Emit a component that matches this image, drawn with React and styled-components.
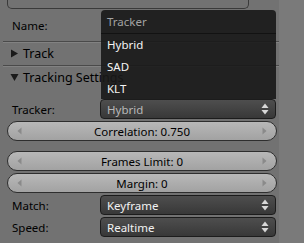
import React from "react";
import styled, { createGlobalStyle } from "styled-components";

const Global = createGlobalStyle`
  html, body { margin: 0; padding: 0; background: #727272; }
  body { font-family: "Noto Sans", "DejaVu Sans", sans-serif; }
`;

const Screen = styled.div`
  position: relative;
  width: 304px;
  height: 243px;
  overflow: hidden;
  display: flex;
  background: #7a7a7a;
`;

const Panel = styled.div`
  width: 279px;
  display: flex;
  flex-direction: column;
  background: #727272;
`;

const TopBox = styled.div`
  margin-left: 7px;
  width: 240px;
  height: 8px;
  border: 1px solid #3a3a3a;
  border-top: none;
  border-radius: 0 0 5px 5px;
`;

const FieldRow = styled.div`
  display: flex;
  align-items: center;
  height: ${(p) => p.h}px;
  padding: 0 3px 0 12px;
  margin-top: ${(p) => p.mt || 0}px;
`;

const Label = styled.span`
  width: 89px;
  font-size: 11.5px;
  color: #000;
`;

const Sep = styled.div`
  height: 1px;
  margin-left: 3px;
  background: #4a4a4a;
  box-shadow: 0 1px 0 #828282;
`;

const Header = styled.div`
  display: flex;
  align-items: center;
  height: ${(p) => p.h}px;
  padding-left: 10px;
  font-size: 12.5px;
  color: #000;
  gap: 4px;
`;

const Tri = styled.svg`
  width: 9px;
  height: 9px;
`;

const Dropdown = styled.div`
  flex: none;
  width: 174px;
  height: 18px;
  box-sizing: content-box;
  border: 1px solid #1c1c1c;
  border-radius: 4px;
  background: linear-gradient(#4e4e4e, #383838);
  display: flex;
  align-items: center;
  color: ${(p) => (p.dim ? "#b8b8b8" : "#f2f2f2")};
  font-size: 11.5px;
`;

const DropText = styled.span`
  flex: 1;
  padding-left: 6px;
`;

const Arrows = styled.svg`
  width: 8px;
  height: 12px;
  margin-right: 6px;
`;

const SliderRow = styled.div`
  padding: 0 2px 0 7px;
  margin-top: ${(p) => p.mt || 0}px;
`;

const Slider = styled.div`
  height: 18px;
  border: 1px solid #2e2e2e;
  border-radius: 10px;
  background: linear-gradient(#b8b8b8, #a2a2a2);
  display: flex;
  align-items: center;
  font-size: 11.5px;
  color: #000;
`;

const SliderText = styled.span`
  flex: 1;
  text-align: center;
`;

const SmallArrow = styled.svg`
  width: 5px;
  height: 8px;
  margin: 0 9px;
`;

const Menu = styled.div`
  position: absolute;
  left: 101px;
  top: 10px;
  width: 175px;
  height: 89px;
  background: rgba(24, 24, 24, 0.9);
  border-radius: 4px 4px 0 0;
  display: flex;
  flex-direction: column;
  font-size: 11.5px;
`;

const MenuTitle = styled.div`
  height: 23px;
  display: flex;
  align-items: center;
  padding-left: 6px;
  color: #a3a3a3;
  border-bottom: 1px solid #121212;
`;

const MenuItem = styled.div`
  height: 22px;
  display: flex;
  align-items: center;
  padding-left: 6px;
  color: #f4f4f4;
`;

const UpDown = () => (
  <Arrows viewBox="0 0 8 12">
    <path d="M4 0.5 L7.5 5 L0.5 5 Z" fill="#d8d8d8" />
    <path d="M4 11.5 L7.5 7 L0.5 7 Z" fill="#d8d8d8" />
  </Arrows>
);

const SliderBar = ({ children }) => (
  <Slider>
    <SmallArrow viewBox="0 0 5 8">
      <path d="M0.5 4 L4.5 0.5 L4.5 7.5 Z" fill="#8a8a8a" />
    </SmallArrow>
    <SliderText>{children}</SliderText>
    <SmallArrow viewBox="0 0 5 8">
      <path d="M4.5 4 L0.5 0.5 L0.5 7.5 Z" fill="#8a8a8a" />
    </SmallArrow>
  </Slider>
);

export default function App() {
  return (
    <>
      <Global />
      <Screen>
        <Panel>
          <TopBox />
          <FieldRow h={32}>
            <Label>Name:</Label>
          </FieldRow>
          <Sep />
          <Header h={23}>
            <Tri viewBox="0 0 9 9">
              <path d="M1 0.5 L8 4.5 L1 8.5 Z" fill="#1a1a1a" />
            </Tri>
            Track
          </Header>
          <Sep />
          <Header h={23}>
            <Tri viewBox="0 0 9 9">
              <path d="M0.5 1 L8.5 1 L4.5 8 Z" fill="#1a1a1a" />
            </Tri>
            Tracking Settings
          </Header>
          <FieldRow h={20} mt={10}>
            <Label>Tracker:</Label>
            <Dropdown dim>
              <DropText>Hybrid</DropText>
              <UpDown />
            </Dropdown>
          </FieldRow>
          <SliderRow mt={2}>
            <SliderBar>Correlation: 0.750</SliderBar>
          </SliderRow>
          <SliderRow mt={10}>
            <SliderBar>Frames Limit: 0</SliderBar>
          </SliderRow>
          <SliderRow mt={2}>
            <SliderBar>Margin: 0</SliderBar>
          </SliderRow>
          <FieldRow h={20} mt={2}>
            <Label>Match:</Label>
            <Dropdown>
              <DropText>Keyframe</DropText>
              <UpDown />
            </Dropdown>
          </FieldRow>
          <FieldRow h={20} mt={2}>
            <Label>Speed:</Label>
            <Dropdown>
              <DropText>Realtime</DropText>
              <UpDown />
            </Dropdown>
          </FieldRow>
        </Panel>
        <Menu>
          <MenuTitle>Tracker</MenuTitle>
          <MenuItem>Hybrid</MenuItem>
          <MenuItem>SAD</MenuItem>
          <MenuItem>KLT</MenuItem>
        </Menu>
      </Screen>
    </>
  );
}
